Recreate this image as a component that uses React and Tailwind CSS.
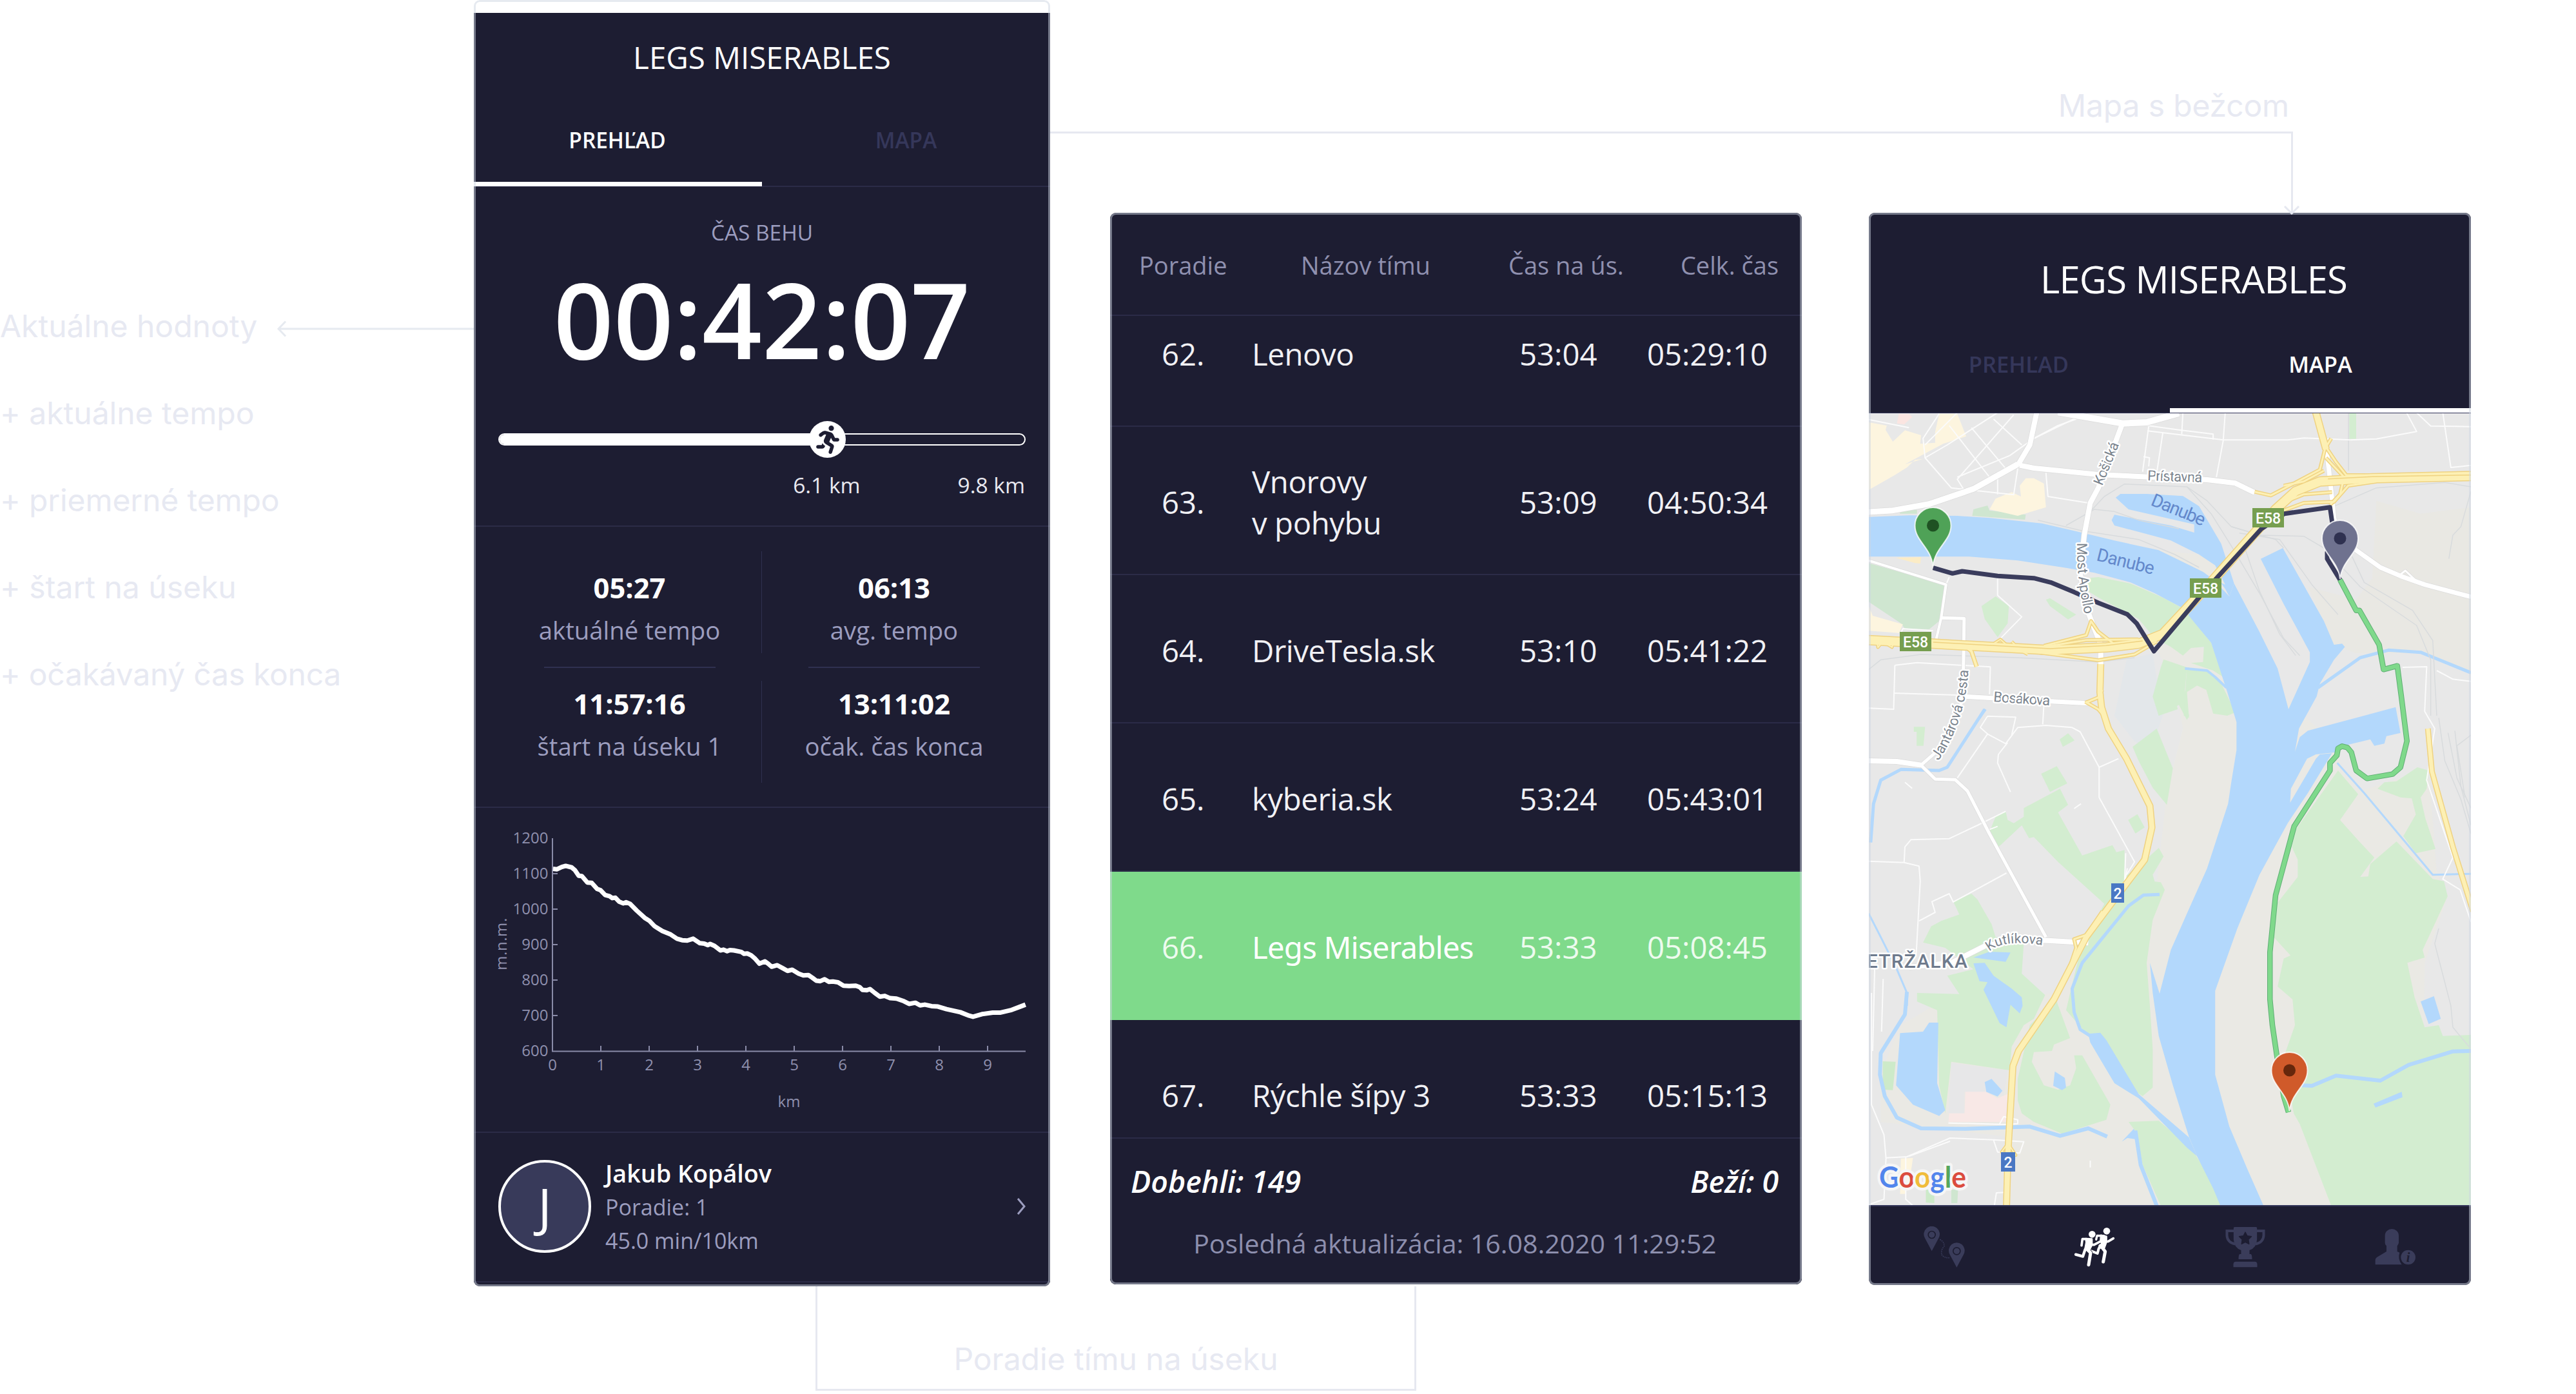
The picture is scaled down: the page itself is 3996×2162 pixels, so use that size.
import React from "react";
import { FaRunning } from "react-icons/fa";

/* ---------- shared pieces ---------- */

const Frame = () => (
  <div className="pointer-events-none absolute inset-0 rounded-[9px] border-[3px] border-[rgba(206,213,226,0.5)]" />
);

const Note = ({ children, className = "" }) => (
  <p className={`mb-[75px] whitespace-nowrap leading-[60px] ${className}`}>{children}</p>
);

/* ---------- overview phone ---------- */

const Stat = ({ value, label, className }) => (
  <div className={`flex h-[158px] flex-col items-center ${className}`}>
    <div className="text-[43.5px] font-bold leading-[56px] text-white">{value}</div>
    <div className="mt-[12px] whitespace-nowrap text-[38.3px] leading-[50px] text-[#9c9dbf]">{label}</div>
  </div>
);

const ELEVATION =
  "258,183 268,184 280,178 290,175 305,179 313,186 323,201 331,202 345,219 356,220 370,236 378,239 390,252 401,255 408,260 416,259 425,269 436,274 443,271 453,275 470,293 490,312 502,320 515,334 535,347 556,356 572,367 585,371 598,372 613,367 630,379 641,380 650,384 656,381 667,386 682,398 690,396 699,400 706,397 716,398 735,402 742,407 750,406 760,411 770,420 781,433 795,427 803,433 812,441 826,437 840,445 852,452 864,449 880,459 892,464 905,463 915,470 925,478 935,479 946,474 957,481 967,480 980,482 994,491 1008,492 1025,491 1035,495 1042,502 1053,503 1061,500 1073,510 1086,520 1098,518 1112,524 1128,525 1147,532 1160,539 1176,536 1188,543 1200,541 1217,545 1233,546 1255,553 1290,561 1312,570 1322,573 1345,566 1372,562 1392,562 1420,555 1440,547 1455,541";

const Y_TICKS = [1200, 1100, 1000, 900, 800, 700, 600];
const X_TICKS = [0, 1, 2, 3, 4, 5, 6, 7, 8, 9];

const ElevationChart = () => (
  <svg viewBox="735 1253 894 502" className="block h-[502px] w-[894px] font-['Open_Sans',sans-serif]">
    <g stroke="#8a8ba8" strokeWidth="2" fill="none">
      <path d="M857 1300V1630.5H1591" />
      {Y_TICKS.slice(1, 6).map((t, i) => (
        <path key={t} d={`M857 ${1355 + i * 55}h8`} />
      ))}
      {X_TICKS.slice(1).map((t) => (
        <path key={t} d={`M${857 + t * 75} 1630v-8`} />
      ))}
    </g>
    <g fill="#8f90ae" fontSize="24">
      {Y_TICKS.map((t, i) => (
        <text key={t} x="850.5" y={1308 + i * 55} textAnchor="end">{t}</text>
      ))}
      {X_TICKS.map((t) => (
        <text key={t} x={857 + t * 75} y="1660" textAnchor="middle">{t}</text>
      ))}
      <text x="1224" y="1716.500" textAnchor="middle">km</text>
      <text x="1502" y="0" textAnchor="middle" letterSpacing="0.6" transform="translate(786 2966) rotate(-90)">m.n.m.</text>
    </g>
    <g transform="translate(700 1240) scale(0.6122 0.588)">
      <polyline points={ELEVATION} fill="none" stroke="#fff" strokeWidth="7" strokeLinejoin="round" vectorEffect="non-scaling-stroke" />
    </g>
  </svg>
);

const OverviewPhone = () => (
  <section className="relative h-[1995px] w-[894px] shrink-0 overflow-hidden rounded-[9px] bg-white pt-5">
    <div className="h-[1975px] bg-[#1d1d32]">
      <h1 className="flex h-[133px] items-center justify-center pt-[4px] text-[47.5px] text-white">LEGS MISERABLES</h1>
      <div className="flex h-[137px] border-b-2 border-[#2b2b47] text-[33.4px] font-semibold">
        <div className="flex h-[136px] w-[447px] items-center justify-center border-b-[7px] border-white pr-[2px] text-white">PREHĽAD</div>
        <div className="flex h-[136px] w-[447px] items-center justify-center pb-[7px] text-[#35375a]">MAPA</div>
      </div>

      <div className="flex h-[525px] flex-col items-center pt-[48px]">
        <div className="text-[33.4px] leading-[44px] text-[#9c9dbf]">ČAS BEHU</div>
        <div className="mt-[22px] text-[162.5px] font-semibold leading-[180px] text-white">00:42:07</div>
        <div className="relative mt-[69px] flex h-[57px] w-[818px] items-center">
          <div className="h-[19px] w-full overflow-hidden rounded-full border-2 border-white">
            <div className="h-full w-[510px] bg-white" />
          </div>
          <div className="absolute left-[482px] flex h-[57px] w-[57px] items-center justify-center rounded-full bg-white">
            <FaRunning className="text-[44px] text-[#1d1d32]" />
          </div>
        </div>
        <div className="mt-[22px] flex w-[816px] justify-end gap-[151px] text-[33.5px] leading-[40px] text-[#e9e9f0]">
          <span>6.1 km</span>
          <span>9.8 km</span>
        </div>
      </div>

      <div className="h-[436px] border-t-2 border-[#2b2b47] px-[37px] pt-[38px]">
        <div className="flex">
          <Stat value="05:27" label="aktuálné tempo" className="w-[410px] border-r border-[#2f3050] pt-[29px]" />
          <Stat value="06:13" label="avg. tempo" className="w-[410px] pt-[29px]" />
        </div>
        <div className="flex h-[43px] items-center justify-around">
          <div className="h-[2px] w-[266px] bg-[#2f3050]" />
          <div className="h-[2px] w-[266px] bg-[#2f3050]" />
        </div>
        <div className="flex">
          <Stat value="11:57:16" label="štart na úseku 1" className="w-[410px] border-r border-[#2f3050] pt-[8px]" />
          <Stat value="13:11:02" label="očak. čas konca" className="w-[410px] pt-[8px]" />
        </div>
      </div>

      <div className="border-y-2 border-[#2b2b47]">
        <ElevationChart />
      </div>

      <div className="flex h-[232px] items-center border-b-2 border-[#2b2b47] px-[38px] pb-[3px]">
        <div className="flex h-[144px] w-[144px] items-center justify-center rounded-full border-4 border-white bg-[#383a5a] text-[80px] font-medium text-white">J</div>
        <div className="ml-[22px] mt-[3px] text-[34px] leading-[52px] text-[#9c9dbf]">
          <div className="text-[37.7px] font-semibold text-white">Jakub Kopálov</div>
          <div>Poradie: 1</div>
          <div>45.0 min/10km</div>
        </div>
        <svg viewBox="0 0 14 28" className="ml-auto h-[28px] w-[14px]" fill="none" stroke="#9c9dbf" strokeWidth="3">
          <path d="M2 2L12 14L2 26" />
        </svg>
      </div>
    </div>
    <Frame />
  </section>
);

/* ---------- ranking table ---------- */

const ROWS = [
  { rank: "62.", name: ["Lenovo"], leg: "53:04", total: "05:29:10" },
  { rank: "63.", name: ["Vnorovy", "v pohybu"], leg: "53:09", total: "04:50:34" },
  { rank: "64.", name: ["DriveTesla.sk"], leg: "53:10", total: "05:41:22" },
  { rank: "65.", name: ["kyberia.sk"], leg: "53:24", total: "05:43:01" },
  { rank: "66.", name: ["Legs Miserables"], leg: "53:33", total: "05:08:45", active: true },
  { rank: "67.", name: ["Rýchle šípy 3"], leg: "53:33", total: "05:15:13" },
];

const RankingPanel = () => (
  <section className="relative ml-[93px] mt-[330px] flex h-[1662px] w-[1073px] shrink-0 flex-col overflow-hidden rounded-[9px] bg-[#1d1d32]">
    <div className="flex h-[160px] shrink-0 items-center border-b-2 border-[#2b2b47] pl-[45px] pr-[36px] pt-[4px] text-[38px] text-[#8f90af]">
      <span className="w-[251px]">Poradie</span>
      <span className="w-[322px]">Názov tímu</span>
      <span>Čas na ús.</span>
      <span className="ml-auto">Celk. čas</span>
    </div>
    <div className="min-h-0 flex-1 overflow-hidden">
      <div className="-mt-[58px]">
        {ROWS.map((r) => (
          <div
            key={r.rank}
            className={`flex h-[230px] items-center border-b-2 pt-[5px] text-[47.3px] leading-[63.5px] ${
              r.active ? "border-[#7fda8b] bg-[#7fda8b] text-[#edfbee]" : "border-[#2b2b47] text-[#f1f1f5]"
            }`}
          >
            <span className="w-[219px] pl-[80px]">{r.rank}</span>
            <span
              className={
                r.active
                  ? "w-[416px] whitespace-nowrap pl-[1px] font-['Noto_Sans',sans-serif] tracking-[-0.8px] text-white"
                  : "w-[416px] whitespace-nowrap pl-[1px] tracking-[-0.4px]"
              }
            >
              {r.name.map((part) => (
                <span key={part} className="block">{part}</span>
              ))}
            </span>
            <span className="w-[198px]">{r.leg}</span>
            <span>{r.total}</span>
          </div>
        ))}
      </div>
    </div>
    <div className="h-[228px] shrink-0 border-t-2 border-[#2b2b47] bg-[#1d1d32]">
      <div className="flex justify-between pl-[32px] pr-[36px] pt-[34px] text-[46.5px] font-semibold italic leading-[64px] text-white">
        <span>Dobehli: 149</span>
        <span>Beží: 0</span>
      </div>
      <div className="mt-[36px] pr-[3px] text-center text-[41px] leading-[56px] text-[#8d8fae]">Posledná aktualizácia: 16.08.2020 11:29:52</div>
    </div>
    <Frame />
  </section>
);

/* ---------- map ---------- */

const BANDS = {
  a: "translate(2880 630) scale(0.625 0.33333)",
  b: "translate(2880 1080) scale(0.625 0.33333)",
  c: "translate(2880 1540) scale(0.625 0.33333)",
};

const Area = ({ b = "a", p, fill }) => <polygon transform={BANDS[b]} points={p} fill={fill} />;

const Line = ({ b = "a", p, s, w }) => (
  <polyline transform={BANDS[b]} points={p} fill="none" stroke={s} strokeWidth={w} strokeLinejoin="round" vectorEffect="non-scaling-stroke" />
);

const BEIGE = "#eae9e4";
const GREEN = "#d3edd0";
const WATER = "#b3d8fc";

const AREAS = [
  ["a", "740,1110 830,1120 950,1150 1200,1600 1180,3720 380,3720 380,3400 60,3330 60,3100 110,2880 200,2780 500,2730 620,2500 740,2300 770,1800 810,1500 790,1300", BEIGE],
  ["a", "1290,440 1400,500 1525,470 1525,1240 1400,1150 1240,1150 1185,1110 1120,840 1240,900 1280,800", "#e9e8e3"],
  ["b", "1090,590 1195,330 1250,440 1420,340 1440,820 1467,930 1410,1240 1400,2730 900,2730 890,1370 1000,830", BEIGE],
  ["a", "670,1180 735,1150 760,1440 730,1600 690,1560 640,1440", "#e3e7ea"],
  // parks
  ["a", "30,730 220,830 205,1000 180,1038 120,1035 110,1010 30,910", "#cfe6d0"],
  ["a", "570,800 600,795 680,825 760,890 815,945 880,1100 910,1260 885,1230 830,1195 860,1190 862,1120 830,1125 810,1160 780,1120 740,1080 700,990 600,890 565,850", GREEN],
  ["a", "345,885 378,930 375,1010 350,1075 318,990 310,930", GREEN],
  ["a", "470,900 480,893 545,970 525,992 480,930", GREEN],
  ["a", "762,1178 820,1215 815,1320 825,1440 820,1460 800,1390 750,1440 735,1350 755,1215", GREEN],
  ["a", "820,1215 870,1235 905,1290 940,1425 920,1440 885,1430 868,1320 845,1300 820,1330 825,1450 812,1440", GREEN],
  ["a", "287,510 290,480 325,462 330,485 420,505 418,528", "#cfe6d0"],
  ["a", "107,500 112,482 150,482 150,500", "#cfe6d0"],
  ["a", "1223,30 1240,30 1240,152 1223,152", GREEN],
  ["b", "735,0 790,0 797,60 750,90", GREEN],
  ["b", "745,150 785,335 770,505 735,425 700,300 685,235", GREEN],
  ["b", "525,172 541,205 512,235 504,200", GREEN],
  ["b", "497,325 523,405 480,445 458,360", GREEN],
  ["b", "697,548 715,610 692,638 674,575", GREEN],
  ["b", "142,142 170,142 166,230 149,230 149,165 142,165", GREEN],
  ["b", "505,430 525,505 500,540 560,740 635,692 645,725 665,715 665,840 700,790 750,705 762,745 735,830 740,862 755,865 765,900 735,1040 720,1240 728,1440 735,1640 735,1820 710,1860 640,1780 580,1590 520,1460 530,1380 560,1150 615,965 500,770 440,655 428,660 410,600 350,705 330,630 345,560 370,535 375,575 390,590 415,560 415,520", GREEN],
  ["b", "240,955 285,918 300,945 335,1060 345,1120 415,1150 410,1290 468,1390 440,1500 415,1530 385,1630 380,1740 235,1700 220,1940 205,1810 200,1460 150,1420 150,1380 255,1385 225,1300 290,1270 220,1170 165,1145 185,1070 210,1045 255,1015", GREEN],
  ["b", "1195,345 1245,455 1200,575 1245,670 1285,750 1250,840 1270,838 1275,780 1340,675 1430,850 1458,860 1467,930 1405,1180 1410,1215 1367,1240 1385,1400 1410,1540 1445,1530 1455,1580 1525,1575 1525,2370 1178,2370 1100,1990 1085,1940 1060,1680 1088,1530 1082,1410 1045,1350 1060,1220 1077,1205 1035,1120 1045,960 1095,840 1095,760 1080,700 1090,620", GREEN],
  ["b", "1310,400 1340,395 1392,330 1420,345 1415,430 1400,470 1412,570 1437,710 1388,730 1357,650 1388,550 1378,475 1350,470 1293,430", GREEN],
  ["c", "495,30 530,210 490,240 485,270 440,275 435,320 465,430 500,450 530,430 545,350 540,290 560,290 630,520 620,590 510,655 440,600 410,560 400,500 400,400 430,150", GREEN],
  ["c", "675,600 750,595 830,720 890,900 905,990 755,990 710,800 695,650", GREEN],
  ["c", "65,318 97,320 90,452 65,450", "#cdeac9"],
  ["c", "172,915 193,915 193,978 172,975", "#cdeac9"],
  ["c", "235,915 252,915 250,978 235,978", "#cfe6d0"],
  // built-up and facility areas
  ["a", "30,75 75,90 72,110 90,165 120,112 160,135 158,175 195,170 195,120 205,35 250,35 272,140 215,175 120,270 165,245 145,250 125,285 95,320 30,390", "#fdf5df"],
  ["a", "405,370 420,335 440,335 465,360 470,470 400,510 330,480 345,430 385,400 408,420", "#fdf5df"],
  ["a", "30,930 40,975 115,1015 105,1055 30,1045", "#fdf5df"],
  ["a", "98,705 160,702 158,732 145,730", "#fbecc6"],
  ["a", "105,35 130,35 138,50 118,85 100,80", "#fbe5e1"],
  ["c", "235,325 375,360 365,480 268,460 268,560 228,560", "#e7e7e8"],
  ["c", "270,460 320,460 350,490 375,470 370,600 228,600 230,560 268,560", "#f8e8e6"],
  ["c", "110,770 140,768 135,830 120,935 108,935", "#fdf5df"],
  // water
  ["a", "30,515 130,508 250,510 330,520 460,545 540,580 640,625 750,670 790,705 860,770 885,805 925,885 937,825 1000,1050 1045,1220 1072,1410 1125,1190 1125,1145 1060,920 1003,710 1058,660 1160,1000 1185,1110 1205,1105 1212,1120 1185,1180 1150,1290 1142,1350 1098,1500 1088,1608 1100,1540 1120,1510 1240,1450 1338,1400 1350,1520 1315,1535 1310,1570 1285,1580 1275,1550 1220,1575 1190,1610 1140,1620 1118,1640 1078,1780 1076,1845 1140,1640 1150,1620 1180,1615 1120,1800 1070,1940 1000,2180 945,2430 890,2720 890,3110 925,3350 970,3550 1010,3720 903,3720 885,3640 845,3490 825,3400 785,3160 750,2930 735,2730 728,2590 752,2733 780,2530 820,2360 870,2150 922,1850 930,1750 943,1600 943,1470 920,1330 880,1100 840,1010 810,940 740,870 680,820 590,775 520,752 400,718 280,700 30,700", WATER],
  ["a", "655,408 720,408 810,418 850,465 905,640 937,825 925,885 915,850 850,690 780,625 640,555 633,530 640,505 780,555 838,588 838,550 675,480 643,425", WATER],
  ["a", "750,670 850,690 890,740 915,830 885,805 860,770", BEIGE],
  ["c", "575,190 605,185 620,220 700,470 825,672 845,760 820,720 700,490 640,420 580,230", WATER],
  ["b", "290,1242 318,1240 340,1300 385,1360 410,1400 412,1440 405,1475 382,1435 372,1540 355,1520 315,1365 325,1330 305,1325", WATER],
  ["b", "290,1215 330,1188 382,1192 370,1235", WATER],
  ["c", "108,187 165,180 180,138 203,138 200,420 220,545 205,572 140,520 98,430", WATER],
  ["c", "318,415 335,400 362,455 350,482 322,460", WATER],
  ["c", "492,365 517,395 520,440 510,452 488,432", WATER],
  ["c", "1400,40 1433,15 1450,120 1420,145", WATER],
  ["c", "1283,515 1353,460 1355,485 1288,533", WATER],
  ["c", "658,692 688,632 693,650 692,680 672,675", WATER],
];

const STREAMS = [
  ["b", "752,922 712,925 675,975 560,1240 535,1360 540,1470 555,1550 580,1580", 5],
  ["c", "125,-5 120,100 60,280 58,380 70,480 100,580 160,630 270,632 430,622 505,665 575,630 622,668", 6],
  ["c", "1105,430 1130,432 1190,385 1300,408 1370,335 1480,272 1525,270", 6],
  ["c", "692,640 705,800 745,990", 6],
  ["b", "30,1010 60,1120 100,1270 125,1380 125,1440", 3],
  ["b", "318,60 225,330 205,345 110,340 60,390 42,500 35,680", 5],
  ["b", "1193,310 1260,450 1430,830 1525,826", 3],
  ["a", "1145,1310 1250,1170 1320,1135 1400,1145 1525,1240", 5],
  ["a", "815,1220 870,1230 890,1260 918,1310", 4],
  ["a", "305,1450 320,1410", 4],
];

const RAILS = [
  ["a", "580,490 615,420 665,362 740,368 820,375 870,440 930,560 1040,620 1060,660"],
  ["a", "520,555 590,480 640,490 700,530 800,570"],
  ["a", "450,530 560,580 700,620 790,690 850,750"],
  ["a", "820,375 880,500 930,650 1000,870 1060,1080 1100,1160"],
  ["a", "930,560 1000,600 1110,605 1160,660 1250,840 1390,1020 1425,1180 1425,1440"],
  ["a", "1230,700 1260,820 1380,950 1430,1090 1440,1440"],
  ["a", "950,590 1050,620 1130,830 1195,970"],
  ["a", "1180,470 1290,380 1460,355 1525,375"],
  ["a", "1525,395 1500,560 1480,600 1470,710"],
  ["a", "30,1225 60,1180 160,1155 400,1170 600,1190 690,1170"],
  ["a", "1221,30 1221,300"],
  ["a", "960,640 1000,860 1050,1060 1090,1160"],
  ["b", "1445,100 1460,300 1500,480 1525,640"],
  ["b", "1468,170 1490,380 1525,520"],
  ["b", "1485,160 1500,420 1525,600"],
  ["b", "1525,180 1490,230 1510,470"],
  ["b", "1445,1080 1435,1150 1475,1440 1480,1540 1520,1630"],
];

const MINOR = [
  ["a", "30,62 130,100"],
  ["a", "205,35 165,150 170,240 235,380 390,412 400,290"],
  ["a", "250,30 170,180"],
  ["a", "350,30 225,180 170,240"],
  ["a", "390,40 250,340 270,400"],
  ["a", "550,50 440,150 380,230 250,330"],
  ["a", "230,90 330,330"],
  ["a", "285,100 370,290"],
  ["a", "340,60 410,180"],
  ["a", "440,150 500,90 545,60"],
  ["a", "470,310 475,420 575,450"],
  ["a", "350,330 350,410"],
  ["a", "725,95 710,305"],
  ["a", "760,125 745,310"],
  ["a", "722,115 880,150 910,157 1070,157 1110,148 1225,157"],
  ["a", "722,90 800,110 885,130 885,155"],
  ["a", "810,30 807,130"],
  ["a", "915,30 910,160 893,330"],
  ["a", "1225,157 1290,152 1390,118 1365,30"],
  ["a", "1390,30 1425,92 1525,95"],
  ["a", "1455,30 1475,285 1525,275"],
  ["a", "712,235 727,240 725,280"],
  ["a", "350,800 350,880 410,980 355,1085"],
  ["a", "230,795 222,830"],
  ["a", "95,1205 150,1193 332,1213 330,1340"],
  ["a", "95,1205 92,1410 30,1405"],
  ["a", "92,1335 262,1345"],
  ["a", "465,1385 462,1480"],
  ["a", "110,1055 115,1035 190,1045"],
  ["a", "1355,1215 1415,1212 1410,1420 1435,1500 1415,1740 1480,2100 1455,2200 1498,2250 1525,2400"],
  ["a", "1440,1230 1480,1270 1525,1280"],
  ["b", "250,380 325,175 370,220 400,145 470,135 535,145 555,165 602,330 602,470 690,770 670,830"],
  ["b", "325,175 307,145 325,92 395,97 385,180"],
  ["b", "375,215 352,270 350,310 382,445"],
  ["b", "602,330 650,290"],
  ["b", "30,767 118,773 155,790 158,860 148,1200"],
  ["b", "118,773 120,700 135,667 230,662 300,600 370,535"],
  ["b", "372,822 240,957 230,918 187,955 195,1005 155,1045"],
  ["b", "322,625 350,605"],
  ["b", "668,730 665,870 672,800"],
  ["b", "540,522 557,500"],
  ["b", "120,400 138,428"],
  ["b", "45,1260 40,1650"],
  ["b", "66,1315 62,1560"],
  ["c", "37,0 37,520 68,660 73,770 68,960 30,985"],
  ["c", "73,767 125,762 232,675 340,683 415,692 405,745 350,740 340,685"],
  ["c", "130,760 232,690"],
  ["c", "122,765 122,960 140,990"],
  ["c", "228,605 370,612 400,608 400,590 365,575 355,610"],
  ["c", "370,928 347,930 342,990"],
  ["c", "580,780 580,812"],
];

const WHITE_ROADS = [
  ["a", "30,492 90,485 180,455 290,385 400,270", 9],
  ["a", "400,275 430,180 447,30", 8],
  ["a", "405,275 440,288 600,318 870,342 940,358 988,402", 8],
  ["a", "500,28 660,80 720,75 800,33", 10],
  ["a", "660,80 640,180 600,380 580,450 565,600 555,780 575,960 606,1110 606,1210", 8],
  ["a", "30,718 222,830 210,985 198,1082", 4],
  ["a", "210,985 267,988 265,1240 262,1350 258,1400 215,1580 160,1670", 5],
  ["a", "262,1350 400,1365 575,1382", 7],
  ["a", "1165,180 1175,340 1185,520 1195,600 1240,670 1300,750 1350,790 1410,830 1525,887", 7],
  ["a", "1345,790 1362,765 1390,815", 3],
  ["b", "30,300 100,303 160,320", 8],
  ["b", "160,320 195,385 245,388 275,440 330,640 470,1120", 5],
  ["b", "575,1147 460,1135 380,1140 320,1160 235,1240 130,1260", 8],
];

const YELLOW_ROADS = [
  ["a", "465,1115 570,1065 582,1000 600,1050 645,1115", 3],
  ["a", "470,1118 570,1088 700,1085", 3],
  ["a", "450,1145 600,1182 690,1155 745,1095", 3],
  ["a", "265,1110 285,1140 298,1212", 4],
  ["a", "340,1105 357,1085 375,1115", 2],
  ["a", "385,1095 410,1140 425,1155", 2],
  ["a", "50,1090 53,1122 65,1095 88,1122 92,1095", 2],
  ["a", "1165,180 1150,295 1085,360 1028,415 988,398", 3],
  ["a", "1178,150 1165,190 1190,260 1215,320 1290,322", 3],
  ["a", "1165,240 1210,330 1200,410 1175,460", 3],
  ["a", "1060,370 1110,350 1160,300", 3],
  ["a", "1045,460 1110,410 1180,400", 3],
  ["a", "1060,485 1110,450 1185,445 1220,370 1290,350", 3],
  ["a", "30,1088 190,1105 480,1135 620,1122 700,1105 760,1060 870,840 1040,480 1090,395 1150,350 1280,335 1525,325", 13],
  ["a", "1140,28 1165,200", 9],
  ["a", "606,1200 604,1330 608,1400 625,1500 670,1640 728,1860 733,1960 715,2110 650,2270 570,2470 490,2760 402,3000 388,3070 376,3460 372,3730", 8],
  ["b", "568,30 600,5 610,-30", 3],
  ["b", "568,25 600,60 618,100", 3],
  ["b", "610,1000 570,1110 540,1130 545,1170 520,1310", 3],
  ["c", "376,700 360,740 395,755 376,700", 2],
  ["b", "1418,150 1428,350 1480,700 1530,1000", 6],
];

const Pin = ({ x, y, fill, dot }) => (
  <g transform={`translate(${x} ${y})`}>
    <path d="M0 0C-3 -29 -28 -39 -28 -63A28 28 0 0 1 28 -63C28 -39 3 -29 0 0Z" fill={fill} stroke="#fff" strokeOpacity="0.8" strokeWidth="2" />
    <circle cy="-63" r="9.5" fill={dot} />
  </g>
);

const Shield = ({ x, y, w, fill, children }) => (
  <g>
    <rect x={x} y={y} width={w} height="30" fill={fill} />
    <text x={x + w / 2} y={y + 23.5} textAnchor="middle" fill="#fff" fontSize="23" fontWeight="500">{children}</text>
  </g>
);

const TRACK_DONE =
  "190,752 238,778 262,768 350,790 440,800 482,820 540,865 600,915 672,968 695,1010 738,1140 850,890 1005,570 1062,500 1175,470 1185,600 1168,680 1168,710 1200,808";
const TRACK_AHEAD =
  "1200,808 1240,950 1248,950 1297,1110 1308,1225 1342,1208 1352,1350 1366,1558 1350,1680 1330,1712 1267,1732 1240,1695 1228,1610 1218,1588 1205,1582 1195,1592 1192,1625 1175,1660 1175,1695 1086,1955 1040,2275 1026,2540 1026,2760 1032,2880 1043,3020 1060,3210 1072,3285";

const CityMap = () => (
  <svg viewBox="2899 641 934 1228" className="block h-[1228px] w-[934px] font-['Roboto',sans-serif]">
    <defs>
      <path id="jantarova" d="M3007 1180Q3050 1118 3054 1032" />
      <path id="apollo" d="M3222 842Q3221 900 3236 962" />
      <path id="kutlikova" d="M3086 1476Q3108 1455 3176 1467" />
    </defs>
    <rect x="2899" y="641" width="934" height="1228" fill="#e8e8e8" />
    {AREAS.map(([b, p, f], i) => <Area key={i} b={b} p={p} fill={f} />)}
    {STREAMS.map(([b, p, w], i) => <Line key={i} b={b} p={p} s={WATER} w={w} />)}
    {RAILS.map(([b, p], i) => <Line key={i} b={b} p={p} s="#d8dbdd" w={1.5} />)}
    {MINOR.map(([b, p], i) => <Line key={i} b={b} p={p} s="#fbfbfb" w={2} />)}
    {WHITE_ROADS.map(([b, p, w], i) => <Line key={i} b={b} p={p} s="#dcdcdc" w={w + 1.5} />)}
    {WHITE_ROADS.map(([b, p, w], i) => <Line key={i} b={b} p={p} s="#ffffff" w={w} />)}
    {YELLOW_ROADS.map(([b, p, w], i) => <Line key={i} b={b} p={p} s="#efd281" w={w + 3} />)}
    {YELLOW_ROADS.map(([b, p, w], i) => <Line key={i} b={b} p={p} s="#fdf0b4" w={w} />)}
    <Line p="190,1098 480,1128 620,1114 710,1092" s="#efd281" w={1.5} />
    <Line p="1170,338 1280,328 1525,320" s="#efd281" w={1.5} />

    <Line p={TRACK_DONE} s="#3a3c5c" w={7} />
    <Line p={TRACK_AHEAD} s="#5fae74" w={8.5} />
    <Line p={TRACK_AHEAD} s="#7fd98b" w={6.5} />

    <g fill="#7a838d" fontSize="22" stroke="#fff" strokeWidth="5" strokeLinejoin="round" paintOrder="stroke">
      <text transform="translate(3261 754) rotate(-68)" textLength="70">Košická</text>
      <text transform="translate(3331 745) rotate(2)" textLength="85">Prístavná</text>
      <text transform="translate(3092 1088) rotate(4)" textLength="88">Bosákova</text>
      <text><textPath href="#jantarova" textLength="150">Jantárová cesta</textPath></text>
      <text><textPath href="#apollo" textLength="112">Most Apollo</textPath></text>
      <text fontSize="21"><textPath href="#kutlikova">Kutlíkova</textPath></text>
      <text x="3053" y="1501" textAnchor="end" fontSize="30" fontWeight="500" fill="#6e7a8c" letterSpacing="1.2">ETRŽALKA</text>
    </g>
    <g fill="#6388cb" fontSize="28">
      <text transform="translate(3335 783) rotate(22)" textLength="88">Danube</text>
      <text transform="translate(3251 869) rotate(14)" textLength="91">Danube</text>
    </g>

    <Shield x={3494} y={788} w={49} fill="#769e4f">E58</Shield>
    <Shield x={3397} y={897} w={49} fill="#769e4f">E58</Shield>
    <Shield x={2947} y={980} w={49} fill="#769e4f">E58</Shield>
    <Shield x={3275} y={1370} w={20} fill="#4a78c4">2</Shield>
    <Shield x={3104} y={1787} w={22} fill="#4a78c4">2</Shield>

    <Pin x={2998.5} y={878} fill="#4fa257" dot="#1f5223" />
    <Pin x={3630} y={898} fill="#6f728f" dot="#2f3150" />
    <Pin x={3551.5} y={1723} fill="#d05a2a" dot="#66270c" />

    <text x="2915" y="1842" fontSize="46" fontFamily="Lato, sans-serif" fontWeight="700" textLength="135" lengthAdjust="spacingAndGlyphs" stroke="#f6f6f6" strokeWidth="9" strokeLinejoin="round" paintOrder="stroke">
      <tspan fill="#5285ec">G</tspan>
      <tspan fill="#db4c3f">o</tspan>
      <tspan fill="#f0bc3a">o</tspan>
      <tspan fill="#5285ec">g</tspan>
      <tspan fill="#57a65c">l</tspan>
      <tspan fill="#db4c3f">e</tspan>
    </text>
  </svg>
);

/* ---------- bottom navigation icons ---------- */

const DIM = "#3a3c5a";
const DARK = "#1d1d32";

const PinPair = () => (
  <svg viewBox="41 65 192 192" className="h-[64px] w-[64px]">
    {[[79, 104], [195, 180]].map(([x, y]) => (
      <g key={x} transform={`translate(${x} ${y})`}>
        <path d="M-32 16A37 37 0 1 1 32 16L0 76Z" fill={DIM} />
        <circle r="19" fill={DARK} />
        <circle r="14" fill={DIM} />
      </g>
    ))}
    <path d="M117 126Q140 140 136 158Q118 178 127 200Q140 213 164 211" fill="none" stroke={DIM} strokeWidth="5" strokeDasharray="5 4" />
  </svg>
);

const Runners = () => (
  <svg viewBox="744 65 192 192" className="h-[64px] w-[64px]" fill="none" stroke="#fff" strokeLinecap="round" strokeLinejoin="round">
    <circle cx="897" cy="87" r="16" fill="#fff" stroke="none" />
    <path d="M848 126L852 108L884 109" strokeWidth="10" />
    <path d="M870 106L896 112L896 138L886 166L860 166L868 130Z" fill="#fff" strokeWidth="7" />
    <path d="M894 136L904 135L928 121" strokeWidth="11" />
    <path d="M876 164L890 182L881 230" strokeWidth="15" />
    <path d="M860 168L854 191L826 180" strokeWidth="12" />
    <path d="M800 124L828 124L828 150L840 152L866 138" stroke={DARK} strokeWidth="17" strokeLinecap="butt" />
    <path d="M806 172L822 188L814 240" stroke={DARK} strokeWidth="20" strokeLinecap="butt" />
    <circle cx="829" cy="102" r="19" fill={DARK} stroke="none" />
    <circle cx="829" cy="102" r="16" fill="#fff" stroke="none" />
    <path d="M780 154L784 124L802 124" strokeWidth="11" />
    <path d="M800 122L828 124L828 152L816 176L796 172L802 140Z" fill="#fff" strokeWidth="8" />
    <path d="M828 150L838 151L866 136" strokeWidth="11" />
    <path d="M806 172L822 188L813 244" strokeWidth="15" />
    <path d="M797 172L786 205L753 196" strokeWidth="13" />
  </svg>
);

const Trophy = () => (
  <svg viewBox="31.5 65 192 192" className="h-[64px] w-[64px]" fill={DIM}>
    <path d="M78 68H177Q182 68 182 73V125Q180 165 147 176V194H154Q159 197 159 218H96Q96 197 101 194H108V176Q75 165 73 125V73Q73 68 78 68Z" />
    <path d="M74 86H42V108Q44 140 82 148M181 86H213V108Q211 140 173 148" fill="none" stroke={DIM} strokeWidth="12" />
    <path d="M84 229H171Q183 229 183 242V255H72V242Q72 229 84 229Z" />
    <path d="M127.500 92L136 109L156 112L142 126L145 147L127.500 138L110 147L113 126L99 112L119 109Z" fill={DARK} stroke={DARK} strokeWidth="4" strokeLinejoin="round" />
  </svg>
);

const UserInfo = () => (
  <svg viewBox="733 65 192 192" className="h-[64px] w-[64px]" fill={DIM}>
    <path d="M780 108A32 31 0 0 1 844 108V142Q842 150 837 156V182L848 187Q838 215 858 243H735V222Q735 214 742 209L787 182V156Q780 150 780 142Z" />
    <circle cx="888" cy="209" r="34" />
    <text x="888" y="230" textAnchor="middle" fontFamily="Liberation Serif, serif" fontStyle="italic" fontWeight="700" fontSize="62" fill={DARK}>i</text>
  </svg>
);

const MapPhone = () => (
  <section className="relative ml-[104px] mt-[330px] h-[1663px] w-[934px] shrink-0 overflow-hidden rounded-[9px] bg-[#1d1d32]">
    <h2 className="flex h-[170px] items-center justify-center pl-[74px] pt-[34px] text-[58px] tracking-[-0.8px] text-white">LEGS MISERABLES</h2>
    <div className="flex h-[141px] border-b border-[#34365a] text-[34.5px] font-semibold">
      <div className="flex w-[467px] items-center justify-center pb-[10px] pr-[2px] text-[#35375a]">PREHĽAD</div>
      <div className="flex w-[467px] items-center justify-center border-b-[7px] border-white pb-[3px] text-white">MAPA</div>
    </div>
    <CityMap />
    <nav className="grid h-[124px] grid-cols-4 place-items-center border-t-2 border-[#34365a] pt-[3px]">
      <PinPair />
      <Runners />
      <Trophy />
      <UserInfo />
    </nav>
    <Frame />
  </section>
);

/* ---------- board ---------- */

export default function App() {
  return (
    <main className="relative flex h-[2162px] w-[3996px] items-start overflow-hidden bg-white font-['Open_Sans',sans-serif]">
      <aside className="w-[735px] shrink-0 pt-[476px] font-['Inter',sans-serif] text-[48px] text-[#e7e9f2]">
        <Note>Aktuálne hodnoty</Note>
        <Note>+ aktuálne tempo</Note>
        <Note className="tracking-[-0.1px]">+ priemerné tempo</Note>
        <Note>+ štart na úseku</Note>
        <Note className="tracking-[-0.25px]">+ očakávaný čas konca</Note>
      </aside>
      <OverviewPhone />
      <RankingPanel />
      <MapPhone />

      <svg viewBox="0 0 306 26" className="absolute left-[429px] top-[497px] h-[26px] w-[306px]" fill="none" stroke="#e6eaf0" strokeWidth="3">
        <path d="M306 13H3M14 1.500L3 13L14 24.500" />
      </svg>

      <div className="absolute right-[445px] top-[136px] whitespace-nowrap font-['Inter',sans-serif] text-[48px] leading-[56px] tracking-[-0.15px] text-[#e7e9f2]">
        Mapa s bežcom
      </div>
      <div className="absolute left-[1629px] top-[204px] h-[126px] w-[1928px] border-r-[3px] border-t-[3px] border-[#e6e8f0]" />
      <svg viewBox="0 0 26 14" className="absolute left-[3542px] top-[319px] h-[14px] w-[26px]" fill="none" stroke="#e6e8f0" strokeWidth="3">
        <path d="M2 1L13 12L24 1" />
      </svg>

      <div className="absolute left-[1265px] top-[1995px] flex h-[162px] w-[932px] items-center justify-center border-x-[3px] border-b-[3px] border-[#e6e8f0] pt-[66px] font-['Inter',sans-serif] text-[48px] text-[#e7e9f2]">
        Poradie tímu na úseku
      </div>
    </main>
  );
}
